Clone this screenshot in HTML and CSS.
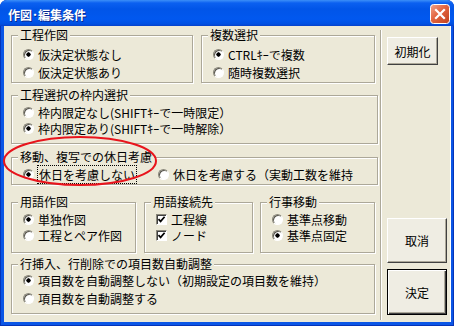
FILE: index.html
```html
<!DOCTYPE html>
<html lang="ja">
  <head>
    <meta charset="UTF-8" />
    <title>作図･編集条件</title>
    <link rel="stylesheet" href="styles.css">
  </head>
  <body>
    <div class="window">
      <div class="titlebar">
        <span class="title">作図･編集条件</span>
        <span class="close">
          <svg width="20" height="20" viewBox="0 0 20 20">
            <defs>
              <linearGradient id="closeBg" x1="0" y1="0" x2="1" y2="1">
                <stop offset="0" stop-color="#f2a58c" />
                <stop offset="0.45" stop-color="#e2643f" />
                <stop offset="1" stop-color="#c0401c" />
              </linearGradient>
            </defs>
            <rect x="0.5" y="0.5" width="19" height="19" rx="3" fill="url(#closeBg)" stroke="#fff" />
            <path d="M6 6 L14 14 M14 6 L6 14" stroke="#fff" stroke-width="2.2" stroke-linecap="square" />
          </svg>
        </span>
      </div>

      <div class="client">
        <div class="main">
          <!-- 工程作図 / 複数選択 -->
          <div class="row row-a">
            <fieldset class="group g-sakuzu">
              <legend>工程作図</legend>
              <label class="opt"><span class="radio checked"></span>仮決定状態なし</label>
              <label class="opt"><span class="radio"></span>仮決定状態あり</label>
            </fieldset>
            <fieldset class="group g-fukusu">
              <legend>複数選択</legend>
              <label class="opt"><span class="radio checked"></span>CTRLｷｰで複数</label>
              <label class="opt"><span class="radio"></span>随時複数選択</label>
            </fieldset>
          </div>

          <fieldset class="group g-waku">
            <legend>工程選択の枠内選択</legend>
            <label class="opt"><span class="radio"></span>枠内限定なし(SHIFTｷｰで一時限定）</label>
            <label class="opt"><span class="radio checked"></span>枠内限定あり(SHIFTｷｰで一時解除）</label>
          </fieldset>

          <fieldset class="group g-kyujitsu">
            <legend>移動、複写での休日考慮</legend>
            <div class="opt-line">
              <label class="opt first"><span class="radio checked"></span><span class="focus">休日を考慮しない</span></label>
              <label class="opt"><span class="radio"></span>休日を考慮する（実動工数を維持</label>
            </div>
          </fieldset>

          <!-- 用語作図 / 用語接続先 / 行事移動 -->
          <div class="row row-d">
            <fieldset class="group g-yogo">
              <legend>用語作図</legend>
              <label class="opt"><span class="radio checked"></span>単独作図</label>
              <label class="opt"><span class="radio"></span>工程とペア作図</label>
            </fieldset>
            <fieldset class="group g-setsuzoku">
              <legend>用語接続先</legend>
              <label class="opt">
                <span class="check"><svg width="9" height="9" viewBox="0 0 9 9"><path d="M1.5 4.2 L3.6 6.4 L7.6 1.8" fill="none" stroke="#000" stroke-width="1.7" /></svg></span>工程線
              </label>
              <label class="opt">
                <span class="check"><svg width="9" height="9" viewBox="0 0 9 9"><path d="M1.5 4.2 L3.6 6.4 L7.6 1.8" fill="none" stroke="#000" stroke-width="1.7" /></svg></span>ノード
              </label>
            </fieldset>
            <fieldset class="group g-gyoji">
              <legend>行事移動</legend>
              <label class="opt"><span class="radio"></span>基準点移動</label>
              <label class="opt"><span class="radio checked"></span>基準点固定</label>
            </fieldset>
          </div>

          <fieldset class="group g-gyo">
            <legend>行挿入、行削除での項目数自動調整</legend>
            <label class="opt"><span class="radio checked"></span>項目数を自動調整しない（初期設定の項目数を維持）</label>
            <label class="opt"><span class="radio"></span>項目数を自動調整する</label>
          </fieldset>
        </div>

        <div class="sep"></div>

        <div class="side">
          <button class="btn btn-init">初期化</button>
          <button class="btn btn-cancel">取消</button>
          <button class="btn btn-ok">決定</button>
        </div>

        <!-- red marker drawn over the dialog -->
        <svg class="marker" width="170" height="70" viewBox="0 0 170 70">
          <ellipse cx="76" cy="35" rx="76" ry="24" fill="none" stroke="#e8141c" stroke-width="2" />
        </svg>
      </div>
    </div>
  </body>
</html>
```

FILE: styles.css
```css
* {
  margin: 0;
  padding: 0;
  box-sizing: border-box;
}

body {
  background: #fff;
  font-family: "Noto Sans CJK JP", "Noto Sans", sans-serif;
  font-size: 12px;
  color: #000;
}

/* Window frame */
.window {
  width: 454px;
  height: 326px;
  display: flex;
  flex-direction: column;
  padding: 0 3px 4px 4px;
  background: #0b56e6;
  border-radius: 7px 7px 0 0;
  box-shadow: inset 0 0 0 1px #0634b8;
}

.titlebar {
  height: 26px;
  margin: 0 -3px 0 -4px;
  padding: 2px 4px 0 8px;
  display: flex;
  align-items: center;
  justify-content: space-between;
  border-radius: 7px 7px 0 0;
  background: linear-gradient(#3c8ff8 0, #0b60f0 3px, #0155e8 9px, #0158ef 19px, #0150e2 24px, #0840c8 26px);
}

.title {
  color: #fff;
  font-weight: bold;
  font-size: 12px;
  text-shadow: 1px 1px 0 #0a2a90;
}

.close {
  display: flex;
  margin-top: -1px;
}

.client {
  flex: 1;
  position: relative;
  display: flex;
  background: #ece9d8;
  border-right: 1px solid #fff;
}

/* Left column with the groups */
.main {
  width: 373px;
  padding: 2px 0 0 7px;
}

.row {
  display: flex;
}

.group {
  border: 1px solid #aca899;
  box-shadow: inset 1px 1px 0 #fff, 1px 1px 0 #fff;
  padding: 0 6px;
  min-width: 0;
}

.group legend {
  padding: 0 2px;
  line-height: 14px;
  background: #ece9d8;
}

.opt {
  display: flex;
  align-items: center;
  height: 16px;
  padding-left: 5px;
  white-space: nowrap;
}

.radio {
  flex: none;
  width: 11px;
  height: 11px;
  margin-right: 4px;
  border-radius: 50%;
  border: 1px solid;
  border-color: #8a877a #fff #fff #8a877a;
  box-shadow: inset 1px 1px 0 #5a5850;
  background: #fff;
}

.radio.checked {
  background: radial-gradient(circle, #000 0 1.9px, #fff 2.4px);
}

.check {
  flex: none;
  display: flex;
  align-items: center;
  justify-content: center;
  width: 11px;
  height: 11px;
  margin-right: 4px;
  border: 1px solid;
  border-color: #8a877a #fff #fff #8a877a;
  box-shadow: inset 1px 1px 0 #404040;
  background: #fff;
}

.focus {
  outline: 1px dotted #000;
  padding: 0 1px;
}

/* 工程作図 / 複数選択 */
.row-a .group {
  padding-top: 4px;
  padding-bottom: 2px;
}

.row-a .opt + .opt {
  margin-top: 2px;
}

.g-sakuzu {
  width: 182px;
}

.g-fukusu {
  width: 174px;
  margin-left: 8px;
}

/* 工程選択の枠内選択 */
.g-waku {
  width: 367px;
  margin-top: 5px;
  padding-top: 2px;
  padding-bottom: 7px;
}

/* 移動、複写での休日考慮 */
.g-kyujitsu {
  width: 367px;
  margin-top: 6px;
  padding-top: 2px;
  padding-bottom: 2px;
}

.opt-line {
  display: flex;
}

.g-kyujitsu .opt.first {
  width: 135px;
}

/* 用語作図 / 用語接続先 / 行事移動 */
.row-d {
  margin-top: 10px;
}

.row-d .group {
  padding-top: 3px;
  padding-bottom: 9px;
}

.row-d .opt {
  height: 15px;
}

.row-d .opt + .opt {
  margin-top: 1px;
}

.g-yogo {
  width: 125px;
}

.g-setsuzoku {
  width: 109px;
  margin-left: 8px;
}

.g-gyoji {
  width: 115px;
  margin-left: 7px;
}

/* 行挿入、行削除での項目数自動調整 */
.g-gyo {
  width: 364px;
  margin-top: 4px;
  padding-top: 1px;
  padding-bottom: 7px;
}

.g-gyo .opt + .opt {
  margin-top: 2px;
}

/* Separator and buttons */
.sep {
  width: 2px;
  margin: 4px 0 2px 3px;
  border-left: 1px solid #aca899;
  border-right: 1px solid #fff;
}

.side {
  flex: 1;
  display: flex;
  flex-direction: column;
  padding: 11px 0 7px 5px;
}

.btn {
  font-family: inherit;
  font-size: 12px;
  color: #000;
  background: #efede3;
  border: 1px solid;
  border-color: #fff #404040 #404040 #fff;
  box-shadow: inset -1px -1px 0 #aca899;
}

.btn-init {
  width: 51px;
  height: 28px;
}

.btn-cancel {
  width: 60px;
  height: 45px;
  margin-top: auto;
}

.btn-ok {
  width: 60px;
  height: 46px;
  margin-top: 6px;
  border: 1px solid #000;
  box-shadow: inset 1px 1px 0 #fff, inset -1px -1px 0 #404040, inset -2px -2px 0 #aca899;
}

.marker {
  position: absolute;
  left: 0;
  top: 100px;
  overflow: visible;
  pointer-events: none;
}
```
